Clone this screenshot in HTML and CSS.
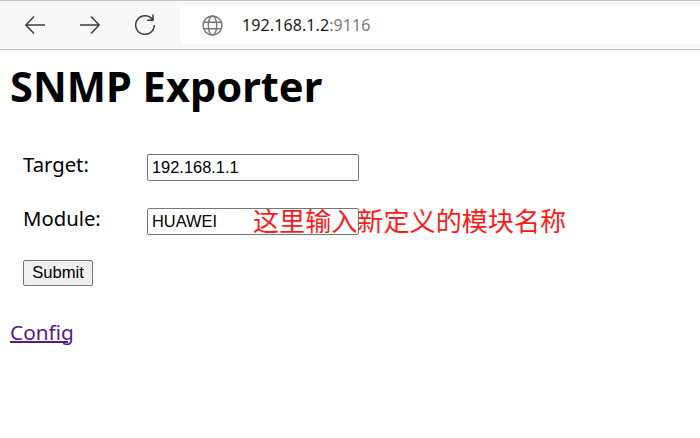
FILE: index.html
```html
<!DOCTYPE html>
<html lang="en">
  <head>
    <meta charset="UTF-8" />
    <title>SNMP Exporter</title>
    <link rel="stylesheet" href="styles.css">
  </head>
  <body>
    <div class="toolbar">
      <svg class="nav-icon" viewBox="0 0 20 20"><path d="M20 10H.8M9 1.500L.8 10 9 18.500" /></svg>
      <svg class="nav-icon" viewBox="0 0 20 20"><path d="M0 10h19.200M11 1.500l8.200 8.500L11 18.500" /></svg>
      <svg class="nav-icon" viewBox="0 0 20 20"><path d="M17.500 4.500A9.300 9.300 0 1 0 19.300 10M18 -.5V5.200h-5.700" /></svg>
      <div class="address">
        <svg class="globe" viewBox="0 0 20 20">
          <circle cx="10" cy="10" r="9" />
          <ellipse cx="10" cy="10" rx="4" ry="9" />
          <path d="M1.500 7h17M1.500 13h17" />
        </svg>
        <span class="host">192.168.1.2<span class="port">:9116</span></span>
      </div>
    </div>

    <main class="page">
      <h1>SNMP Exporter</h1>

      <form class="probe">
        <label for="target">Target:</label>
        <input id="target" type="text" value="192.168.1.1" />

        <label for="module">Module:</label>
        <div class="module-cell">
          <input id="module" type="text" value="HUAWEI" />
          <span class="note">这里输入新定义的模块名称</span>
        </div>

        <button type="button">Submit</button>
      </form>

      <a class="config" href="#">Config</a>
    </main>
  </body>
</html>
```
FILE: styles.css
```css
* {
  box-sizing: border-box;
}
body {
  margin: 0;
  background: #fff;
  color: #000;
  font-family: "Noto Sans", "Noto Sans CJK SC", sans-serif;
}

.toolbar {
  display: flex;
  align-items: center;
  gap: 35px;
  height: 50px;
  padding-left: 25px;
  background: #f7f7f7;
  border-top: 1px solid #c4c4c4;
  border-bottom: 1px solid #c4c4c4;
}
.nav-icon {
  width: 20px;
  height: 20px;
  overflow: visible;
  fill: none;
  stroke: #3c3c3c;
  stroke-width: 1.5;
}
.address {
  display: flex;
  align-items: center;
  gap: 19px;
  flex: 1;
  height: 38px;
  margin-left: -10px;
  padding-left: 22px;
  background: #fff;
  border-radius: 6px 0 0 6px;
}
.globe {
  width: 21px;
  height: 21px;
  fill: none;
  stroke: #777;
  stroke-width: 1.4;
}
.host {
  font-size: 16px;
  letter-spacing: 0.1px;
  color: #1a1a1a;
}
.port {
  color: #7a7a7a;
}

.page {
  padding: 0 10px;
}
h1 {
  margin: 6px 0 0;
  font-size: 41.6px;
  line-height: 60px;
  font-weight: 700;
}

.probe {
  display: grid;
  grid-template-columns: 124px 212px;
  grid-template-rows: 27px 27px 26px;
  row-gap: 27px;
  align-items: center;
  margin: 38px 0 0 13px;
}
.probe label {
  font-size: 20.3px;
  line-height: 27px;
  margin-top: -7px;
}
.probe input {
  display: block;
  width: 212px;
  height: 27px;
  padding: 0 4px;
  border: 1px solid #767676;
  border-radius: 2px;
  background: #fff;
  font-family: "Liberation Sans", sans-serif;
  font-size: 16.4px;
  color: #000;
}
.module-cell {
  position: relative;
}
.note {
  position: absolute;
  left: 106px;
  top: -4px;
  white-space: nowrap;
  font-family: "Noto Sans CJK SC", sans-serif;
  font-size: 26.1px;
  line-height: 32px;
  color: #ff1a1a;
}
.probe button {
  grid-column: 1;
  justify-self: start;
  width: 70px;
  height: 26px;
  margin-top: -4px;
  padding: 0;
  border: 1px solid #767676;
  border-radius: 2px;
  background: #efefef;
  font-family: "Liberation Sans", sans-serif;
  font-size: 16.6px;
  color: #000;
}

.config {
  display: inline-block;
  margin-top: 31px;
  font-size: 20.8px;
  line-height: 27px;
  text-decoration-thickness: 2px;
  color: #551a8b;
}
```
